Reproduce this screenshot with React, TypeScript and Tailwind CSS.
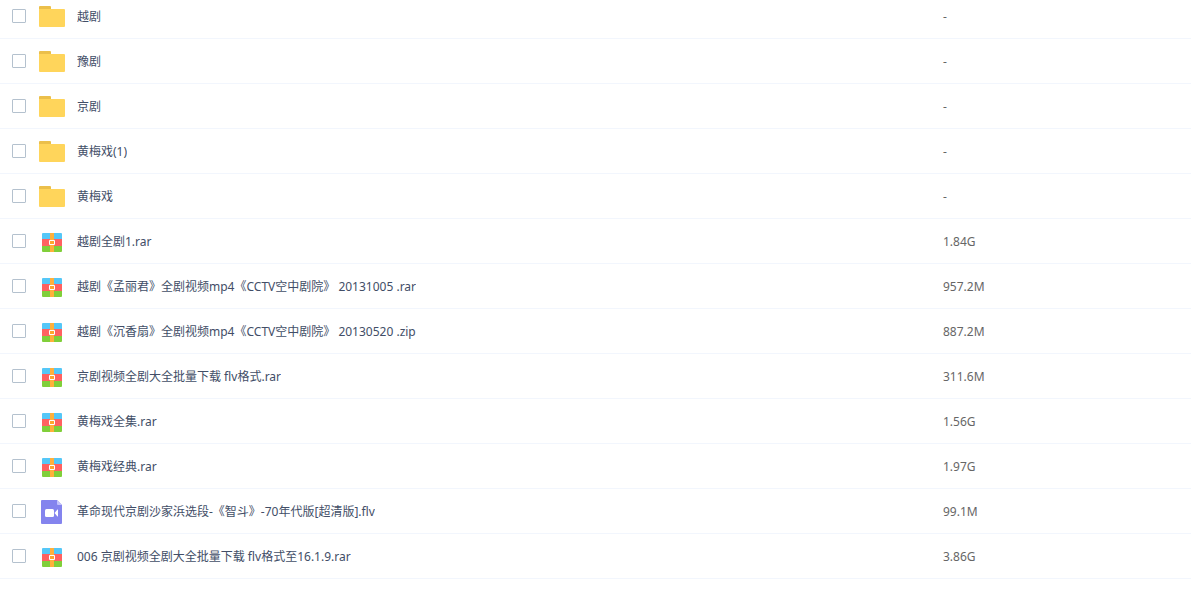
import React from 'react';

type FileKind = 'folder' | 'archive' | 'video';

interface FileItem {
  name: string;
  kind: FileKind;
  size: string;
}

const files: FileItem[] = [
  { name: '越剧', kind: 'folder', size: '-' },
  { name: '豫剧', kind: 'folder', size: '-' },
  { name: '京剧', kind: 'folder', size: '-' },
  { name: '黄梅戏(1)', kind: 'folder', size: '-' },
  { name: '黄梅戏', kind: 'folder', size: '-' },
  { name: '越剧全剧1.rar', kind: 'archive', size: '1.84G' },
  { name: '越剧《孟丽君》全剧视频mp4《CCTV空中剧院》 20131005 .rar', kind: 'archive', size: '957.2M' },
  { name: '越剧《沉香扇》全剧视频mp4《CCTV空中剧院》 20130520 .zip', kind: 'archive', size: '887.2M' },
  { name: '京剧视频全剧大全批量下载 flv格式.rar', kind: 'archive', size: '311.6M' },
  { name: '黄梅戏全集.rar', kind: 'archive', size: '1.56G' },
  { name: '黄梅戏经典.rar', kind: 'archive', size: '1.97G' },
  { name: '革命现代京剧沙家浜选段-《智斗》-70年代版[超清版].flv', kind: 'video', size: '99.1M' },
  { name: '006 京剧视频全剧大全批量下载 flv格式至16.1.9.rar', kind: 'archive', size: '3.86G' },
];

function FileIcon({ kind }: { kind: FileKind }) {
  return (
    <svg viewBox="0 0 26 26" className="size-[26px] shrink-0" aria-hidden="true">
      {kind === 'folder' && (
        <>
          <path d="M0 8V4a1 1 0 0 1 1-1h10a1 1 0 0 1 1 1v4z" fill="#ebbf4b" />
          <path d="M0 6h25a1 1 0 0 1 1 1v16a1 1 0 0 1-1 1H1a1 1 0 0 1-1-1z" fill="#ffd55b" />
        </>
      )}
      {kind === 'archive' && (
        <>
          <path d="M3 11V6a1 1 0 0 1 1-1h18a1 1 0 0 1 1 1v5z" fill="#55c7f7" />
          <path d="M3 11h20v7H3z" fill="#ff6161" />
          <path d="M3 18h20v5a1 1 0 0 1-1 1H4a1 1 0 0 1-1-1z" fill="#80cf3a" />
          <path d="M11 5h4v19h-4z" fill="#ffb03b" />
          <path d="M10.5 12.5h5v4h-5z" fill="#ffa52e" stroke="#fff" />
        </>
      )}
      {kind === 'video' && (
        <>
          <path d="M3 2h15l5 5v18a1 1 0 0 1-1 1H3a1 1 0 0 1-1-1V3a1 1 0 0 1 1-1z" fill="#8484ee" />
          <path d="M18 2l5 5h-4a1 1 0 0 1-1-1z" fill="#c3c3fa" />
          <rect x="6" y="11" width="9" height="8" rx="1.5" fill="#fff" />
          <path d="M15.500 15l3-3.500h.5v7h-.5z" fill="#fff" />
        </>
      )}
    </svg>
  );
}

export default function App() {
  const [selected, setSelected] = React.useState<string[]>([]);

  const toggle = (name: string) => {
    setSelected((prev) =>
      prev.includes(name) ? prev.filter((item) => item !== name) : [...prev, name]
    );
  };

  return (
    <main className="min-h-screen overflow-hidden bg-white font-['Noto_Sans','Noto_Sans_CJK_SC',sans-serif] text-xs">
      <table className="-mt-1.5 w-full table-fixed border-separate border-spacing-0">
        <tbody>
          {files.map((file, index) => (
            <tr key={file.name}>
              <td className="h-[45px] border-b border-[#f2f6fd] p-0 align-middle">
                <div className="flex items-center pl-3">
                  <input
                    id={`file-${index}`}
                    type="checkbox"
                    checked={selected.includes(file.name)}
                    onChange={() => toggle(file.name)}
                    className="mr-[13px] size-3.5 shrink-0 appearance-none rounded-[1px] border border-[#b4c1ce] bg-white checked:bg-[#3b8cff]"
                  />
                  <FileIcon kind={file.kind} />
                  <label htmlFor={`file-${index}`} className="ml-3 truncate pt-0.5 text-[#424e67]">
                    {file.name}
                  </label>
                </div>
              </td>
              <td className="w-62 border-b border-[#f2f6fd] p-0 pt-0.5 align-middle text-[#666]">
                {file.size}
              </td>
            </tr>
          ))}
        </tbody>
      </table>
    </main>
  );
}
